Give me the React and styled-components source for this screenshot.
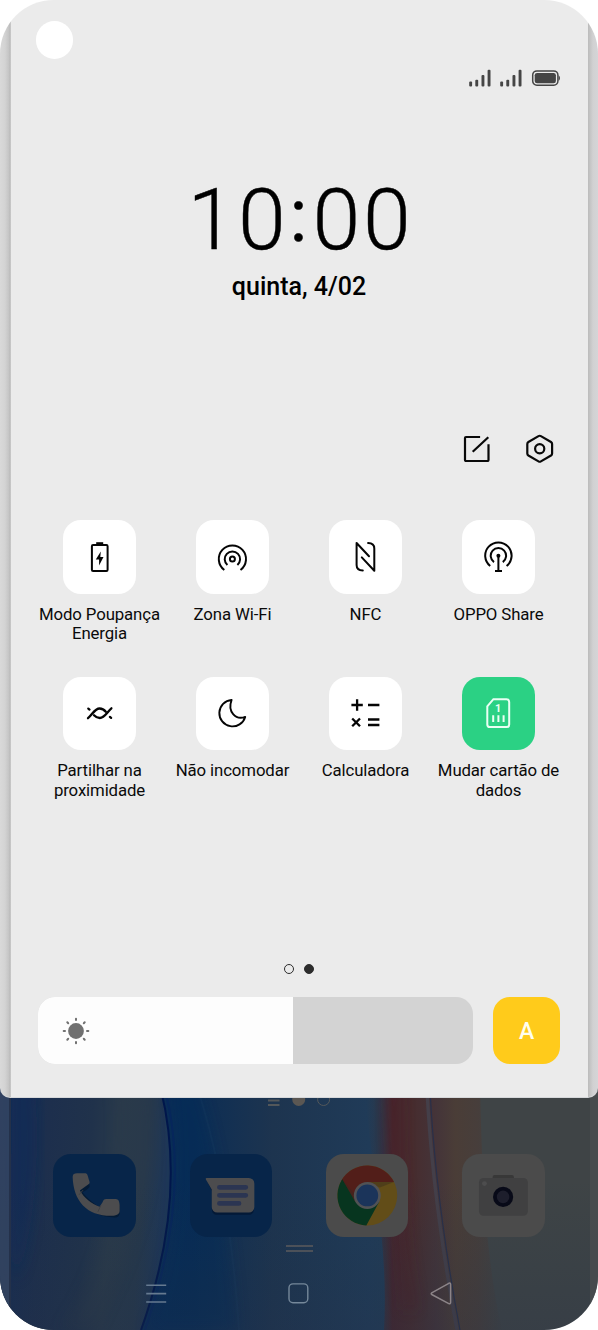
import React from "react";
import styled, { createGlobalStyle } from "styled-components";

const GlobalStyle = createGlobalStyle`
  *, *::before, *::after { box-sizing: border-box; }
  body { margin: 0; background: #fff; }
  svg { display: block; flex: none; }
`;

const Phone = styled.div`
  position: relative;
  display: flex;
  flex-direction: column;
  width: 598px;
  height: 1330px;
  overflow: hidden;
  border-radius: 54px;
  font-family: Roboto, "Liberation Sans", sans-serif;
  color: #0a0a0a;
`;

const Wallpaper = styled.svg`
  position: absolute;
  left: 0;
  bottom: 0;
`;

const Panel = styled.section`
  position: relative;
  display: flex;
  flex-direction: column;
  height: 1098px;
  padding: 0 38px;
  border-radius: 0 0 10px 10px;
  background:
    linear-gradient(90deg, #d9d9d9 0, #d3d3d3 5px, #c4c4c4 9px, #b9b9b9 10px, #d2d2d2 11px) left / 11px 100% no-repeat,
    linear-gradient(270deg, #d5d5d7 0, #d1d1d2 5px, #c4c4c4 8px, #bbbbbb 10px) right / 10px 100% no-repeat,
    #ebebeb;
  box-shadow: inset 0 -1px 0 #d6d8da;
`;

const StatusBar = styled.header`
  display: flex;
  justify-content: space-between;
  height: 120px;
`;

const PunchHole = styled.div`
  width: 37.6px;
  height: 37.6px;
  margin: 21.2px 0 0 -2.5px;
  border-radius: 50%;
  background: #fff;
`;

const StatusIcons = styled.div`
  display: flex;
  gap: 9px;
  padding-top: 69px;
`;

const Clock = styled.div`
  height: 314px;
  padding-top: 49px;
  text-align: center;
`;

const Time = styled.div`
  height: 102px;
  padding-left: 3px;
  font-size: 86px;
  font-weight: 300;
  line-height: 102px;
  letter-spacing: 2.8px;
  -webkit-text-stroke: 0.4px #000;
  color: #000;
  white-space: nowrap;
`;

const Colon = styled.span`
  display: inline-block;
  width: 24px;
  margin-left: -2px;
  margin-right: 2px;
  font-size: 74px;
  font-weight: 400;
  line-height: 74px;
  letter-spacing: 0;
  vertical-align: 8px;
`;

const Day = styled.div`
  font-size: 25px;
  font-weight: 500;
  line-height: 31px;
  color: #000;
`;

const Actions = styled.div`
  display: flex;
  justify-content: flex-end;
  gap: 34px;
  height: 86.3px;
  padding: 0 5px 0 0;
`;

const ToggleGrid = styled.div`
  display: grid;
  grid-template-columns: repeat(4, 133px);
  grid-auto-rows: 156.5px;
  height: 433px;
  margin: 0 -5px;
`;

const Toggle = styled.div`
  display: flex;
  flex-direction: column;
  align-items: center;
`;

const ToggleTile = styled.div`
  width: 73.4px;
  height: 73.4px;
  border-radius: 18px;
  background: ${({ $active }) => ($active ? "#2bd184" : "#fff")};
  color: ${({ $active }) => ($active ? "#eafff4" : "#050505")};
`;

const ToggleLabel = styled.div`
  margin-top: 11.2px;
  font-size: 16.8px;
  line-height: 19.2px;
  letter-spacing: -0.12px;
  text-align: center;
  white-space: pre;
`;

const Pager = styled.div`
  display: flex;
  justify-content: center;
  gap: 9.5px;
  height: 44px;
  padding-top: 10.5px;
`;

const PageDot = styled.span`
  width: 10.5px;
  height: 10.5px;
  border: 1.2px solid #2c2c2c;
  border-radius: 50%;
  background: ${({ $current }) => ($current ? "#2c2c2c" : "transparent")};
`;

const BrightnessRow = styled.div`
  display: flex;
  gap: 20px;
  padding-left: 0.3px;
`;

const Slider = styled.div`
  width: 435.2px;
  height: 66.5px;
  border-radius: 17px;
  overflow: hidden;
  background: #d3d3d3;
`;

const SliderFill = styled.div`
  display: flex;
  align-items: center;
  width: 255.2px;
  height: 100%;
  padding-left: 24px;
  background: #fdfdfd;
`;

const AutoButton = styled.div`
  display: flex;
  align-items: center;
  justify-content: center;
  width: 66.5px;
  height: 66.5px;
  padding-top: 1px;
  border-radius: 17px;
  background: #ffcb1b;
  color: #fffef0;
  font-size: 23px;
  font-weight: 500;
`;

const HomeScreen = styled.main`
  position: relative;
  display: flex;
  flex-direction: column;
  align-items: center;
  height: 232px;
`;

const HomePager = styled.div`
  height: 56px;
`;

const Dock = styled.div`
  display: flex;
  gap: 53.4px;
  height: 91px;
`;

const AppTile = styled.div`
  width: 82.8px;
  height: 82.8px;
  border-radius: 18px;
  background: ${({ $color }) => $color};
`;

const DockHandle = styled.div`
  width: 27px;
  height: 7px;
  border: solid #4c5159;
  border-width: 2px 0;
`;

const NavBar = styled.nav`
  display: flex;
  justify-content: space-between;
  width: 309px;
  padding: 30px 2px 0 0;
`;

const TileSvg = ({ children }) => (
  <svg width="73" height="73" viewBox="0 0 73 73" fill="none" stroke="currentColor" strokeWidth="2">
    {children}
  </svg>
);

const AppSvg = ({ children }) => (
  <svg width="82.8" height="82.8" viewBox="0 0 83 83" fill="none">
    {children}
  </svg>
);

const toggles = [
  {
    label: "Modo Poupança\nEnergia",
    icon: (
      <>
        <rect x="28.9" y="25" width="15.7" height="26" rx="1.2" />
        <path d="M33.2 22.2h7v2.5h-7z" fill="currentColor" stroke="none" />
        <path d="M37.8 31.5 32.8 39.6h3.3v5.9l4.4-8.4h-3.2z" fill="currentColor" stroke="none" />
      </>
    ),
  },
  {
    label: "Zona Wi-Fi",
    icon: (
      <>
        <circle cx="36.4" cy="39" r="2.5" />
        <path d="M31.4 45A7.7 7.7 0 1 1 41.4 45" />
        <path d="M28.3 50A13.6 13.6 0 1 1 44.5 50" />
      </>
    ),
  },
  {
    label: "NFC",
    icon: (
      <g strokeLinecap="round" strokeLinejoin="round">
        <path d="M40 36.2 27.6 23V45c0 3.6 2.4 5.4 6.2 5.5" />
        <path d="M32.8 37.4 45.3 50.7V28.5c0-3.6-2.4-5.4-6.2-5.5" />
      </g>
    ),
  },
  {
    label: "OPPO Share",
    icon: (
      <>
        <circle cx="36.4" cy="35.7" r="2" fill="currentColor" stroke="none" />
        <path d="M28.2 46A13.2 13.2 0 1 1 44.6 46M32 42.1A7.7 7.7 0 1 1 40.8 42.1M36.4 36v15M33 51h7" />
      </>
    ),
  },
  {
    label: "Partilhar na\nproximidade",
    icon: (
      <g strokeWidth="2.3" strokeLinecap="round">
        <path d="M25 41.2C29 38 31.8 31.5 36.6 31.5c2.8 0 4.8 1.5 6.2 3.2" />
        <path d="M48.4 31.3C44.4 34.5 41.6 41 36.8 41c-2.6 0-4.4-1.2-5.8-2.7" />
        <path d="m25.3 31.6 1.2 1M46.9 39.9l1.2 1" />
      </g>
    ),
  },
  {
    label: "Não incomodar",
    icon: (
      <path
        d="M35.6 23A13.2 13.2 0 1 0 49.2 39.9C39.5 43.5 31.3 34.5 35.6 23Z"
        strokeWidth="1.9"
        strokeLinejoin="round"
      />
    ),
  },
  {
    label: "Calculadora",
    icon: (
      <path
        strokeWidth="2.3"
        d="M22.4 28h11.4M28.1 22.3v11.4M39 28h11.4M23.2 41.5l7.8 7.8M31 41.5l-7.8 7.8M39 42.5h11.4M39 48h11.4"
      />
    ),
  },
  {
    label: "Mudar cartão de\ndados",
    active: true,
    icon: (
      <>
        <path d="M31.4 22.2H44.5a2.7 2.7 0 0 1 2.7 2.7V47.4a2.7 2.7 0 0 1-2.7 2.7H28a2.7 2.7 0 0 1-2.7-2.7V29.3Z" />
        <path d="M31.2 38.3v6.6M36.4 38.3v6.6M41.6 38.3v6.6" />
        <text x="36" y="34.6" textAnchor="middle" fontSize="10.8" fontWeight="700" fill="currentColor" stroke="none">
          1
        </text>
      </>
    ),
  },
];

const Signal = () => (
  <svg width="22" height="18" viewBox="0 0 22 18" fill="#454545">
    <rect x="0.2" y="12.5" width="2.9" height="5" rx="1" />
    <rect x="6.3" y="10.8" width="2.9" height="6.7" rx="1" />
    <rect x="12.5" y="6" width="2.9" height="11.5" rx="1" />
    <rect x="18.6" y="0.7" width="2.9" height="16.8" rx="1" />
  </svg>
);

const Battery = () => (
  <svg width="29" height="18" viewBox="0 0 29 18">
    <rect x="1.7" y="1.9" width="25.2" height="14.4" rx="4.2" fill="none" stroke="#454545" strokeWidth="1.5" />
    <rect x="3.7" y="3.9" width="21.2" height="10.4" rx="2.4" fill="#454545" />
    <path d="M27.6 6.2q1.4.8 1.4 2.9t-1.4 2.9z" fill="#454545" />
  </svg>
);

const Sun = () => (
  <svg width="28" height="28" viewBox="-14 -14 28 28" stroke="#707070" strokeWidth="2" strokeLinecap="round">
    <circle r="7.9" fill="#707070" stroke="none" />
    {[0, 45, 90, 135, 180, 225, 270, 315].map((a) => (
      <path key={a} d="M0-11v-1.3" transform={`rotate(${a})`} />
    ))}
  </svg>
);

const WallpaperArt = () => (
  <Wallpaper width="598" height="245" viewBox="0 1085 598 245">
    <defs>
      <linearGradient id="left" x2="1" y2="0.12">
        <stop offset="0" stopColor="#142b55" />
        <stop offset="0.3" stopColor="#1d2f4d" />
        <stop offset="0.55" stopColor="#20324b" />
        <stop offset="0.7" stopColor="#28394b" />
        <stop offset="0.88" stopColor="#26384c" />
        <stop offset="1" stopColor="#1f3757" />
      </linearGradient>
      <linearGradient id="middle" x2="1">
        <stop offset="0" stopColor="#082c58" />
        <stop offset="0.18" stopColor="#0b2d55" />
        <stop offset="0.42" stopColor="#1d344f" />
        <stop offset="0.7" stopColor="#203b58" />
        <stop offset="1" stopColor="#293d4d" />
      </linearGradient>
      <linearGradient id="warm" x2="1">
        <stop offset="0" stopColor="#293d4d" stopOpacity="0" />
        <stop offset="0.2" stopColor="#45262d" />
        <stop offset="0.34" stopColor="#472c2e" />
        <stop offset="0.52" stopColor="#443439" />
        <stop offset="0.66" stopColor="#4a3d37" />
        <stop offset="0.82" stopColor="#473e3b" />
        <stop offset="1" stopColor="#3f4345" />
      </linearGradient>
      <linearGradient id="shade" x2="0" y2="1">
        <stop offset="0" stopColor="#1c3243" stopOpacity="0" />
        <stop offset="1" stopColor="#243047" stopOpacity="0.7" />
      </linearGradient>
      <filter id="soft" x="-30%" y="-10%" width="160%" height="120%">
        <feGaussianBlur stdDeviation="7" />
      </filter>
    </defs>
    <rect y="1085" width="598" height="245" fill="#3f4446" />
    <path d="M130 1085h340v245H130z" fill="url(#middle)" />
    <path d="M0 1085H160C177 1155 175 1235 141 1330H0Z" fill="url(#left)" />
    <path d="M12 1080H34C42 1160 32 1240 16 1280L11 1260Z" fill="#102b59" opacity=".5" filter="url(#soft)" />
    <path d="M115 1080h30c15 70 5 140-50 250H60c48-70 62-150 55-250Z" fill="#303e49" opacity=".25" filter="url(#soft)" />
    <path d="M195 1080c25 70 34 160 42 250h-90c25-70 37-140 23-250Z" fill="#062c59" opacity=".45" filter="url(#soft)" />
    <path d="M198 1090C219 1155 233 1240 239 1330" fill="none" stroke="#244a68" strokeWidth="2" opacity=".18" />
    <path d="M365 1085h115c2 95 6 175 22 245H384C389 1240 370 1170 365 1085Z" fill="url(#warm)" />
    <path d="M385 1070h16c0 100 4 180 17 240h-15c-7-90-13-160-18-240Z" fill="#4c1e28" opacity=".45" filter="url(#soft)" />
    <path d="M161 1090C177 1155 175 1235 141 1330" fill="none" stroke="#00164b" strokeWidth="2" />
    <path d="M165 1090C182 1155 178 1235 145 1330" fill="none" stroke="#06265b" strokeWidth="2" />
    <path d="M427 1090C431 1170 442 1250 457 1330" fill="none" stroke="#443f49" strokeWidth="3.4" />
    <path d="M430 1090C434 1170 445 1250 460 1330" fill="none" stroke="#29304a" strokeWidth="1.2" />
    <path d="M0 1180h598v150H0z" fill="url(#shade)" opacity=".4" />
    <path d="M0 1085h9v245H0z" fill="#3a4a64" opacity=".75" />
    <path d="M9 1085h2v245H9z" fill="#24314a" />
    <path d="M590 1085h8v245h-8z" fill="#4c4e50" opacity=".7" />
  </Wallpaper>
);

const PhoneIcon = () => (
  <AppSvg>
    <path d="M23 22c.8 24 14 39 38.5 40 3.6.1 5.5-1.8 5.5-5v-6c0-3-1.3-4.6-4-5.2-3.7-.8-8.6-.8-11.2-.3-1.5 1.6-2.8 4.2-4 6.7C40 48.3 34 42.5 29.5 36.8c3-1.7 6-3.5 7.2-5.3-.2-3.2-1-7.5-2-10-1-1.8-2.4-1.7-4.3-1.7h-4.5c-2 0-2.9.4-2.9 2.2Z" fill="#03152b" opacity=".65" transform="translate(0 1.6)" />
    <path d="M19.7 23c.8 24 14 39 38.5 39 5.4.1 8.6-1.5 8.6-5v-6c-.3-4-1.2-5.8-3.8-6H53.5c-2.4 0-3 1.3-3.7 3l-3 5C38.5 50.3 31 43.8 26.9 36.7l8.7-6.3c1-.8 1.3-1.6 1-2.7l-1.8-6c-.5-1.8-1.5-2.3-3.2-2.3h-7.4c-2.8 0-4.4.8-4.5 3.6Z" fill="#4c4c4e" />
    <path d="m26 41 4-4.7M45 58l3-6.5" stroke="#3d3f43" strokeWidth="1" />
  </AppSvg>
);

const MessagesIcon = () => (
  <AppSvg>
    <path d="M17 27h42c3 0 5 2 5 5v24c0 3-2 5-5 5H27c-3 0-5-2-5-5V37Z" fill="#031632" opacity=".8" />
    <path d="M16.5 24H59a5.5 5.5 0 0 1 5.5 5.5v23.7a5.5 5.5 0 0 1-5.5 5.5H27.3a5.5 5.5 0 0 1-5.5-5.5V35.5L16.2 26c-.7-1.2-.5-2 .3-2Z" fill="#4c4c4e" />
    <path d="M29.5 33.4h26.4M29.5 41.4h26.4M29.5 49.5h19.6" stroke="#2b3552" strokeWidth="4.8" strokeLinecap="round" />
  </AppSvg>
);

const ChromeIcon = () => (
  <AppSvg>
    <g transform="translate(41.4 41.6)">
      <circle r="30" fill="#624d18" />
      <path d="M-25.98-15A30 30 0 0 1 26.8-13.5H0L-11.7 6.7Z" fill="#521e19" />
      <path d="M-25.1-16.3A30 30 0 0 0-1 30L11.7 6.7 0 0-11.7 6.7Z" fill="#07351f" />
      <path d="M0-13.5H26.8L12.5-8ZM-25.1-16.3-13-2-11.7 6.7Z" fill="#35291f" opacity=".4" />
      <circle r="13.5" fill="#515255" />
      <circle r="10.9" fill="#1b345a" />
    </g>
  </AppSvg>
);

const CameraIcon = () => (
  <AppSvg>
    <path d="M30.7 24v-1a2 2 0 0 1 2-2h17.3a2 2 0 0 1 2 2v1Z" fill="#383838" />
    <rect x="17" y="24" width="49" height="38" rx="4.5" fill="#404041" />
    <circle cx="22.5" cy="29.6" r="2.4" fill="#4d4d4e" />
    <circle cx="41.2" cy="43" r="10.1" fill="#080a18" />
    <circle cx="41.2" cy="43" r="6.3" fill="#1d1e2c" />
  </AppSvg>
);

const apps = [
  { name: "phone", color: "#072549", Icon: PhoneIcon },
  { name: "messages", color: "#072549", Icon: MessagesIcon },
  { name: "chrome", color: "#4b4b4b", Icon: ChromeIcon },
  { name: "camera", color: "#4b4b4b", Icon: CameraIcon },
];

export default function App() {
  return (
    <>
      <GlobalStyle />
      <Phone>
        <WallpaperArt />
        <Panel>
          <StatusBar>
            <PunchHole />
            <StatusIcons>
              <Signal />
              <Signal />
              <Battery />
            </StatusIcons>
          </StatusBar>
          <Clock>
            <Time>
              10<Colon>:</Colon>00
            </Time>
            <Day>quinta, 4/02</Day>
          </Clock>
          <Actions>
            <svg width="28" height="28" viewBox="463.5 435 28 28" fill="none" stroke="#090909" strokeWidth="2.2">
              <path d="M480.6 438H466.5a1 1 0 0 0-1 1v22a1 1 0 0 0 1 1H488a1 1 0 0 0 1-1V445.2M473.2 452.8 488.8 438.2" />
            </svg>
            <svg width="30" height="30" viewBox="525 434 30 30" fill="none" stroke="#090909" strokeWidth="2.2" strokeLinejoin="round">
              <path d="M538.5 436.1q1.2-.7 2.4 0L551 442q1.1.7 1.1 2v9.5q0 1.3-1.1 2l-10.1 5.9q-1.2.7-2.4 0l-10.1-5.9q-1.1-.7-1.1-2V444q0-1.3 1.1-2Z" />
              <circle cx="539.7" cy="448.8" r="4.6" />
            </svg>
          </Actions>
          <ToggleGrid>
            {toggles.map(({ label, active, icon }) => (
              <Toggle key={label}>
                <ToggleTile $active={active}>
                  <TileSvg>{icon}</TileSvg>
                </ToggleTile>
                <ToggleLabel>{label}</ToggleLabel>
              </Toggle>
            ))}
          </ToggleGrid>
          <Pager>
            <PageDot />
            <PageDot $current />
          </Pager>
          <BrightnessRow>
            <Slider>
              <SliderFill>
                <Sun />
              </SliderFill>
            </Slider>
            <AutoButton>A</AutoButton>
          </BrightnessRow>
        </Panel>
        <HomeScreen>
          <HomePager>
            <svg width="64" height="10" viewBox="267 1098 64 10" fill="none" stroke="#53575a">
              <path d="M268 1100.5h11.5M268 1105h11.5" strokeWidth="2" />
              <circle cx="298.7" cy="1099.5" r="6.5" fill="#5b5753" stroke="none" />
              <circle cx="323.6" cy="1099.5" r="6" strokeWidth="1" />
            </svg>
          </HomePager>
          <Dock>
            {apps.map(({ name, color, Icon }) => (
              <AppTile key={name} $color={color}>
                <Icon />
              </AppTile>
            ))}
          </Dock>
          <DockHandle />
          <NavBar>
            <svg width="22" height="22" viewBox="0 0 22 22" fill="none" stroke="#667a90" strokeWidth="1.6">
              <path d="M1.2 3.3h20M1.2 11.6h20M1.2 20h20" />
            </svg>
            <svg width="22" height="22" viewBox="0 0 22 22" fill="none" stroke="#75889a" strokeWidth="1.4">
              <rect x="2" y="1.9" width="18.8" height="18.8" rx="4" />
            </svg>
            <svg width="22" height="24" viewBox="0 0 22 24" fill="none" stroke="#8c8488" strokeWidth="1.5" strokeLinejoin="round">
              <path d="M1.7 10.9 18.8 1.3q1.8-.7 1.8 1V20.6q0 1.7-1.8 1L1.7 12.5q-1-.8 0-1.6Z" />
            </svg>
          </NavBar>
        </HomeScreen>
      </Phone>
    </>
  );
}
